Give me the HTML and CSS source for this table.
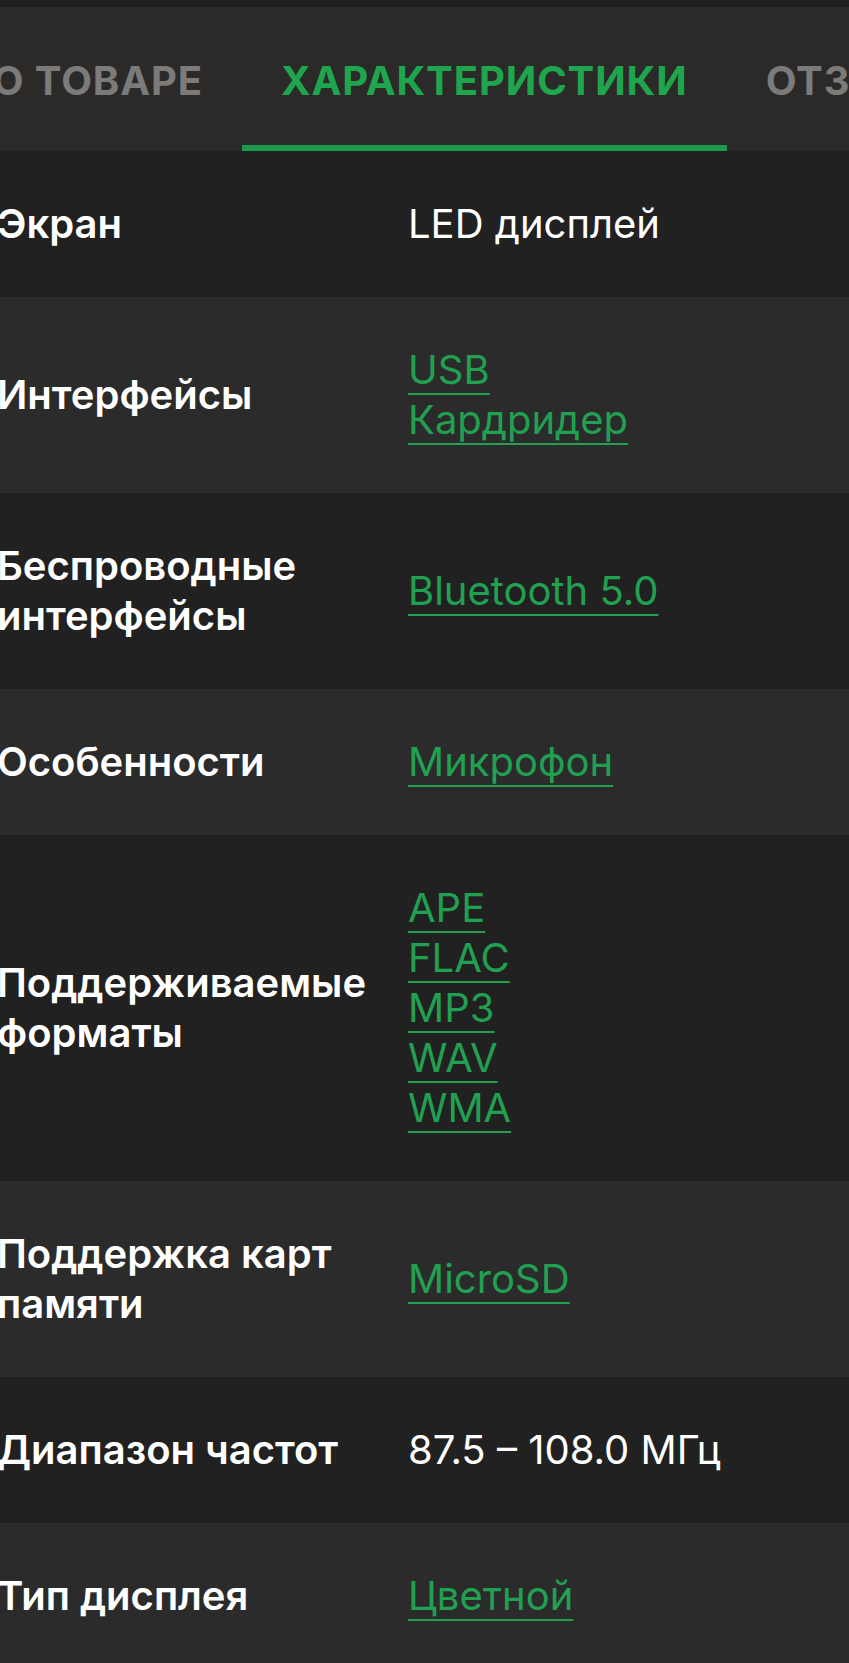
FILE: index.html
```html
<!DOCTYPE html>
<html lang="ru">
<head>
<meta charset="utf-8">
<title>Характеристики</title>
<link rel="stylesheet" href="styles.css">
</head>
<body>
<div class="topstrip"></div>
<nav class="tabs">
  <div class="tab tab-first">О ТОВАРЕ</div>
  <div class="tab tab-active">ХАРАКТЕРИСТИКИ</div>
  <div class="tab">ОТЗЫВЫ</div>
</nav>
<div class="specs">
  <div class="row row-dark">
    <div class="label">Экран</div>
    <div class="value">LED дисплей</div>
  </div>
  <div class="row row-light">
    <div class="label">Интерфейсы</div>
    <div class="value links"><a href="#">USB</a><a href="#">Кардридер</a></div>
  </div>
  <div class="row row-dark">
    <div class="label">Беспроводные интерфейсы</div>
    <div class="value links"><a href="#">Bluetooth 5.0</a></div>
  </div>
  <div class="row row-light">
    <div class="label">Особенности</div>
    <div class="value links"><a href="#">Микрофон</a></div>
  </div>
  <div class="row row-dark">
    <div class="label">Поддерживаемые форматы</div>
    <div class="value links"><a href="#">APE</a><a href="#">FLAC</a><a href="#">MP3</a><a href="#">WAV</a><a href="#">WMA</a></div>
  </div>
  <div class="row row-light">
    <div class="label">Поддержка карт памяти</div>
    <div class="value links"><a href="#">MicroSD</a></div>
  </div>
  <div class="row row-dark">
    <div class="label">Диапазон частот</div>
    <div class="value">87.5 – 108.0 МГц</div>
  </div>
  <div class="row row-light">
    <div class="label">Тип дисплея</div>
    <div class="value links"><a href="#">Цветной</a></div>
  </div>
</div>
</body>
</html>
```
FILE: styles.css
```css
html, body {
  margin: 0;
  padding: 0;
  background: #212121;
  overflow: hidden;
}
body {
  font-family: Inter, "Noto Sans", sans-serif;
  color: #ffffff;
}
.topstrip {
  height: 7px;
  background: #1f1f1f;
}
.tabs {
  display: flex;
  height: 144px;
  background: #2b2a29;
  white-space: nowrap;
}
.tab {
  flex: 0 0 auto;
  display: flex;
  align-items: center;
  padding: 2px 39px 0;
  font-size: 40px;
  font-weight: 700;
  letter-spacing: 0.9px;
  color: #7b7b7b;
}
.tab-first {
  width: 242px;
  box-sizing: border-box;
  justify-content: flex-end;
  overflow: hidden;
}
.tab-active {
  color: #1ea54d;
  box-shadow: inset 0 -6px 0 #1d9b4c;
}
.specs {
  margin-left: -3px;
}
.row {
  display: grid;
  grid-template-columns: 411px 1fr;
  align-items: center;
  padding: 48px 0;
  font-size: 40px;
  line-height: 50px;
}
.row-dark {
  background: #212121;
}
.row-light {
  background: #2b2b2b;
}
.label {
  font-weight: 600;
  padding-right: 22px;
}
.value {
  font-weight: 400;
}
.links {
  display: flex;
  flex-direction: column;
  align-items: flex-start;
}
.links a {
  color: #21a052;
  text-decoration: underline;
  text-decoration-thickness: 2px;
  text-underline-offset: 9px;
}
```
